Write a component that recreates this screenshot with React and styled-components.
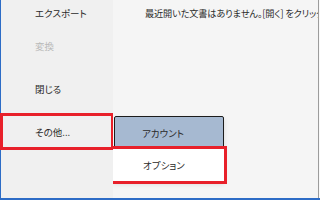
import React from "react";
import styled, { createGlobalStyle } from "styled-components";

const Global = createGlobalStyle`
  html, body { margin: 0; padding: 0; background: #f5f5f5; }
  body {
    font-family: "Noto Sans CJK JP", "Noto Sans", sans-serif;
    font-feature-settings: "palt";
  }
`;

const Windowed = styled.div`
  width: 320px;
  height: 200px;
  display: flex;
  flex-direction: column;
  overflow: hidden;
`;

const Body = styled.div`
  display: flex;
  height: 198px;
`;

const BlueEdge = styled.div`
  width: 1px;
  background: #2d6cc6;
`;

const Sidebar = styled.nav`
  width: 112px;
  background: #f0f0f0;
  display: flex;
  flex-direction: column;
`;

const SideItem = styled.div`
  position: relative;
  height: ${(p) => p.$h}px;
  margin-top: ${(p) => p.$mt || 0}px;
  display: flex;
  align-items: center;
  padding-left: 34px;
  font-size: 9.5px;
  color: ${(p) => (p.$disabled ? "#b9b9b9" : "#2a2a2a")};
  ${(p) =>
    p.$marked &&
    `&::after {
      content: "";
      position: absolute;
      top: 0; bottom: 0; left: -1px; right: -1px;
      border: 3px solid #e8202a;
    }`}
`;

const Main = styled.main`
  position: relative;
  flex: 1;
  background: #f5f5f5;
  overflow: hidden;
`;

const Notice = styled.div`
  height: 25px;
  display: flex;
  align-items: center;
  padding-left: 32px;
  white-space: nowrap;
  font-size: 9.2px;
  letter-spacing: -0.15px;
  color: #2a2a2a;
`;

const GrayEdge = styled.div`
  width: 1px;
  background: #9c9c9c;
`;

const LightEdge = styled.div`
  width: 1px;
  background: #f9f9f9;
`;

const BottomBar = styled.div`
  height: 2px;
  background: #2d6cc6;
`;

const Menu = styled.div`
  position: absolute;
  left: 0;
  top: 116px;
  width: 111px;
  display: flex;
  flex-direction: column;
  box-shadow: 0 3px 5px rgba(0, 0, 0, 0.12);
`;

const MenuItem = styled.div`
  box-sizing: border-box;
  height: ${(p) => p.$h}px;
  display: flex;
  align-items: center;
  padding-left: ${(p) => (p.$active ? 27 : 30)}px;
  font-size: 9.5px;
  color: #2a2a2a;
  background: ${(p) => (p.$active ? "#a6b9d1" : "#ffffff")};
  border: ${(p) => (p.$active ? "1.5px solid #1c1c1c" : "none")};
  border-radius: ${(p) => (p.$active ? "2px" : "0")};
  margin-left: ${(p) => (p.$active ? 1 : 0)}px;
  ${(p) => p.$marked && `outline: 3px solid #e8202a;`}
`;

export default function App() {
  return (
    <>
      <Global />
      <Windowed>
        <Body>
          <BlueEdge />
          <Sidebar>
            <SideItem $h={25}>エクスポート</SideItem>
            <SideItem $h={41} $disabled>変換</SideItem>
            <SideItem $h={45}>閉じる</SideItem>
            <SideItem $h={37} $mt={2} $marked>その他...</SideItem>
          </Sidebar>
          <Main>
            <Notice>最近開いた文書はありません。[開く] をクリックしてください。</Notice>
            <Menu>
              <MenuItem $h={33} $active>アカウント</MenuItem>
              <MenuItem $h={32} $marked>オプション</MenuItem>
            </Menu>
          </Main>
          <GrayEdge />
          <LightEdge />
        </Body>
        <BottomBar />
      </Windowed>
    </>
  );
}
